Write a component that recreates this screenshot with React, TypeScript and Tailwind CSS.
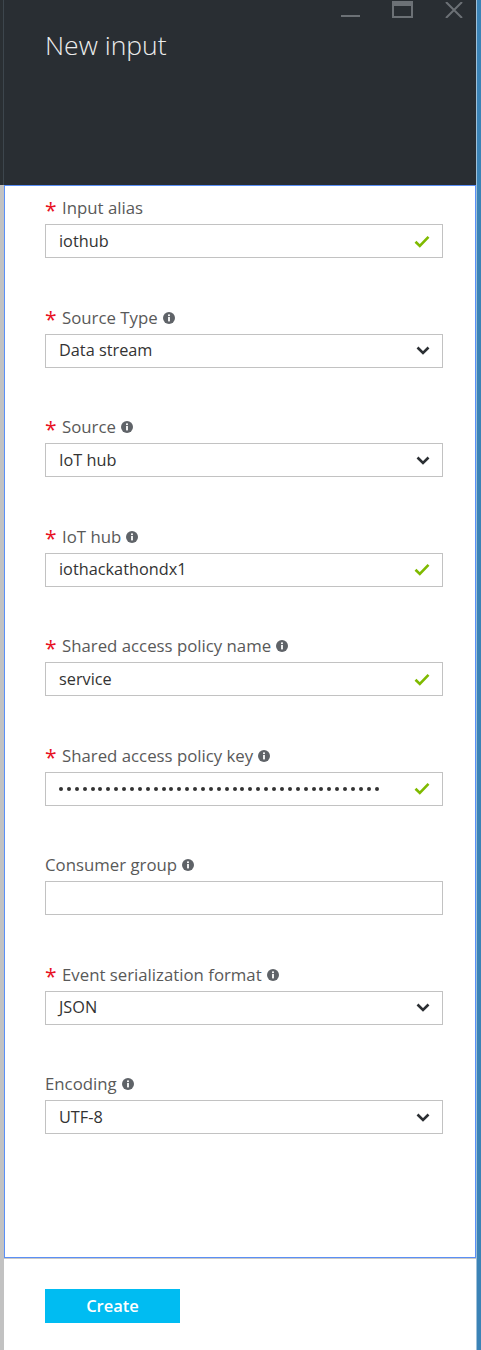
import React from "react";

const font = { fontFamily: '"Open Sans", "Noto Sans", sans-serif' };

function Info() {
  return (
    <svg width="12" height="12" viewBox="0 0 12 12" className="ml-[5px] shrink-0">
      <circle cx="6" cy="6" r="6" fill="#5f6368" />
      <rect x="5.1" y="5" width="1.8" height="4.4" fill="#fff" />
      <circle cx="6" cy="3.2" r="1.05" fill="#fff" />
    </svg>
  );
}

function Check() {
  return (
    <svg width="16" height="13" viewBox="0 0 16 13">
      <path d="M1.5 6.8 L5.8 11 L14.5 1.8" fill="none" stroke="#7fba00" strokeWidth="2.6" />
    </svg>
  );
}

function Chevron() {
  return (
    <svg width="14" height="9" viewBox="0 0 14 9">
      <path d="M1.5 1.5 L7 7 L12.5 1.5" fill="none" stroke="#2b2f33" strokeWidth="2.6" />
    </svg>
  );
}

type Field = {
  label: string;
  required: boolean;
  info: boolean;
  value: string;
  kind: "text" | "select" | "password" | "empty";
};

const fields: Field[] = [
  { label: "Input alias", required: true, info: false, value: "iothub", kind: "text" },
  { label: "Source Type", required: true, info: true, value: "Data stream", kind: "select" },
  { label: "Source", required: true, info: true, value: "IoT hub", kind: "select" },
  { label: "IoT hub", required: true, info: true, value: "iothackathondx1", kind: "text" },
  { label: "Shared access policy name", required: true, info: true, value: "service", kind: "text" },
  { label: "Shared access policy key", required: true, info: true, value: "", kind: "password" },
  { label: "Consumer group", required: false, info: true, value: "", kind: "empty" },
  { label: "Event serialization format", required: true, info: true, value: "JSON", kind: "select" },
  { label: "Encoding", required: false, info: true, value: "UTF-8", kind: "select" },
];

function FieldRow({ f }: { f: Field }) {
  return (
    <div className="flex flex-col">
      <div className="flex items-center h-[22px] mb-[5px]">
        {f.required && (
          <span className="text-[#e81123] text-[21px] leading-none w-[17px] mt-[4px]">*</span>
        )}
        <span className="text-[#595959] text-[16.8px] leading-[22px]">{f.label}</span>
        {f.info && <Info />}
      </div>
      <div className="h-[34px] border border-[#c2c2c2] flex items-center pl-[13px] pr-[12px] bg-white">
        {f.kind === "password" ? (
          <div className="flex flex-1 gap-[3.9px] items-center">
            {Array.from({ length: 41 }).map((_, i) => (
              <span key={i} className="block w-[4px] h-[4px] rounded-full bg-[#333]" />
            ))}
          </div>
        ) : (
          <span className="flex-1 text-[#333] text-[16.3px]">{f.value}</span>
        )}
        {(f.kind === "text" || f.kind === "password") && <Check />}
        {f.kind === "select" && <Chevron />}
      </div>
    </div>
  );
}

export default function App() {
  return (
    <div className="w-[481px] h-[1350px] flex bg-white overflow-hidden" style={font}>
      <div className="w-[4px] flex flex-col shrink-0">
        <div className="h-[185px] bg-[#2a2f33] border-r border-[#3d464d]" />
        <div className="flex-1 bg-[#c2c2c2]" />
      </div>
      <div className="flex-1 flex flex-col">
        <div className="h-[185px] bg-[#292e33] relative shrink-0">
          <div className="absolute left-[337px] top-[15px] w-[19px] h-[2px] bg-[#6c7176]" />
          <div className="absolute left-[388px] top-[1px] w-[21px] h-[17px] border-[2px] border-t-[5px] border-[#6c7176]" />
          <svg className="absolute left-[441px] top-[2px]" width="18" height="16" viewBox="0 0 18 16">
            <path d="M1 0 L17 16 M17 0 L1 16" stroke="#6c7176" strokeWidth="2" />
          </svg>
          <div className="pl-[41px] pt-[28px] text-[26.5px] leading-[34px] text-[#ececec] font-light">New input</div>
        </div>
        <div className="h-[1073px] border border-[#5a8ff6] bg-white pl-[40px] pr-[32px] pt-[11px] flex flex-col gap-[48.5px]">
          {fields.map((f) => (
            <FieldRow key={f.label} f={f} />
          ))}
        </div>
        <div className="flex-1 border-t border-[#c8c8c8] pl-[41px] pt-[30px]">
          <button className="w-[135px] h-[34px] bg-[#00bcf2] text-white font-semibold text-[16.5px]">
            Create
          </button>
        </div>
      </div>
      <div className="w-[5px] shrink-0 flex">
        <div className="w-[1px] bg-[#9fc0d8]" />
        <div className="flex-1 bg-[#3b83b6]" />
      </div>
    </div>
  );
}
